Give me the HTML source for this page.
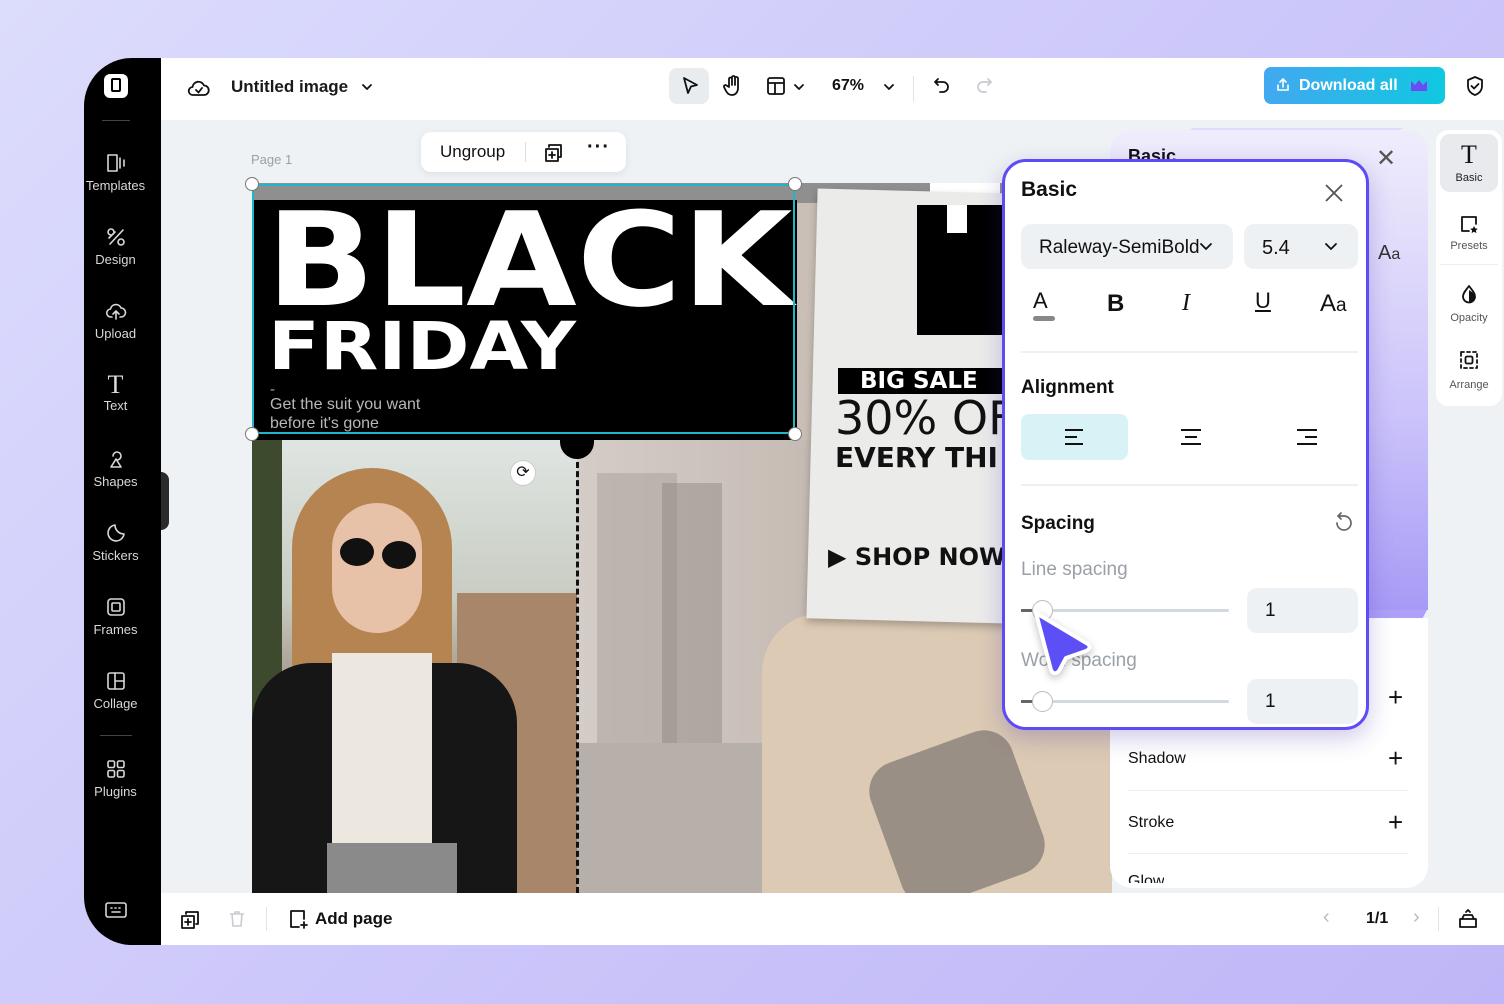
<!DOCTYPE html>
<html><head><meta charset="utf-8">
<style>
*{margin:0;padding:0;box-sizing:border-box}
body{width:1504px;height:1004px;overflow:hidden;font-family:"Liberation Sans",sans-serif;background:linear-gradient(135deg,#dcdcfc 0%,#cdc8fa 50%,#bfb6f7 100%);position:relative;color:#111}
.a{position:absolute}
.app{left:84px;top:58px;width:1420px;height:887px;background:#eff2f5;border-radius:48px 0 0 48px;overflow:hidden}
.side{left:0;top:0;width:77px;height:887px;background:#000;color:#d8d8d8;font-size:13px;text-align:center}
.si{position:absolute;left:-7px;width:77px}
.si svg{display:block;margin:0 auto 4px}
.top{left:77px;top:0;width:1343px;height:62px;background:#fff}
.bot{left:77px;top:835px;width:1343px;height:52px;background:#fff}
.ic{stroke:#111;fill:none;stroke-width:1.8;stroke-linecap:round;stroke-linejoin:round}
.wi{stroke:#d8d8d8;fill:none;stroke-width:1.6;stroke-linecap:round;stroke-linejoin:round}
.pop{left:1002px;top:159px;width:367px;height:571px;background:#fff;border:3px solid #5d4cf6;border-radius:24px;box-shadow:0 8px 24px rgba(60,40,160,.25)}
.pill{background:#eef1f4;border-radius:10px;position:absolute}
.lbl{position:absolute;font-size:19px;font-weight:bold;color:#111}
.gl{position:absolute;font-size:19px;color:#9aa0a8}
</style></head><body>

<div class="a app">
  <div class="a" style="left:168px;top:125px;width:860px;height:710px;background:#c9bfb6;overflow:hidden">
    <div class="a" style="left:325px;top:257px;width:535px;height:453px;background:linear-gradient(90deg,#d4ccc6 0%,#c7bdb6 40%,#bdb2a8 60%,#d6c7b5 100%)"></div>
    <div class="a" style="left:345px;top:290px;width:80px;height:300px;background:#a8a09a;opacity:.5"></div>
    <div class="a" style="left:410px;top:300px;width:60px;height:260px;background:#8c8580;opacity:.45"></div>
    <div class="a" style="left:325px;top:560px;width:260px;height:150px;background:#b7b0aa"></div>
    <div class="a" style="left:510px;top:430px;width:350px;height:280px;background:#dccab4;border-radius:60px 0 0 0"></div>
    <div class="a" style="left:630px;top:560px;width:150px;height:150px;background:#9a8f85;border-radius:30px;transform:rotate(-20deg)"></div>
    <div class="a" style="left:0;top:257px;width:325px;height:453px;background:linear-gradient(180deg,#dfe5e2 0%,#c8ccc2 35%,#9c8a78 60%,#7a6a5a 100%)"></div>
    <div class="a" style="left:0;top:257px;width:30px;height:453px;background:#3d4a2e"></div>
    <div class="a" style="left:205px;top:410px;width:120px;height:300px;background:#a8866a"></div>
    <div class="a" style="left:40px;top:285px;width:160px;height:240px;background:#b58450;border-radius:80px 80px 40px 40px"></div>
    <div class="a" style="left:80px;top:320px;width:90px;height:130px;background:#e7c2a8;border-radius:45px"></div>
    <div class="a" style="left:88px;top:355px;width:34px;height:28px;background:#111;border-radius:50%"></div>
    <div class="a" style="left:130px;top:358px;width:34px;height:28px;background:#111;border-radius:50%"></div>
    <div class="a" style="left:0;top:480px;width:265px;height:230px;background:#161616;border-radius:60px 60px 0 0"></div>
    <div class="a" style="left:80px;top:470px;width:100px;height:240px;background:#ece8df"></div>
    <div class="a" style="left:75px;top:660px;width:130px;height:50px;background:#8a8a8a"></div>
    <div class="a" style="left:324px;top:270px;width:0;height:440px;border-left:3px dashed #111"></div>
    <div class="a" style="left:308px;top:248px;width:34px;height:28px;background:#000;border-radius:0 0 17px 17px"></div>
    <div class="a" style="left:0;top:0;width:545px;height:257px;background:#000"></div>
    <div class="a" style="left:0;top:0;width:560px;height:17px;background:#8f8f8f"></div>
    <div class="a" style="left:14px;top:12px;font-size:130px;line-height:1;font-weight:bold;color:#fff;transform:scaleX(1.1);transform-origin:left;font-family:'DejaVu Sans',sans-serif;white-space:nowrap">BLACK</div>
    <div class="a" style="left:16px;top:131px;font-size:66px;line-height:1;font-weight:bold;color:#fff;transform:scaleX(1.15);transform-origin:left;font-family:'DejaVu Sans',sans-serif;white-space:nowrap">FRIDAY</div>
    <div class="a" style="left:18px;top:198px;font-size:15px;color:#aaa">-</div>
    <div class="a" style="left:18px;top:212px;font-size:16px;color:#b8b8b8;line-height:19px">Get the suit you want<br>before it's gone</div>
    <div class="a" style="left:545px;top:0;width:315px;height:20px;background:#8f8f8f"></div>
    <div class="a" style="left:678px;top:0;width:70px;height:20px;background:#fff"></div>
    <div class="a" style="left:560px;top:8px;width:200px;height:430px;background:#ebebea;transform:rotate(1.5deg);box-shadow:0 4px 8px rgba(0,0,0,.25)"></div>
    <div class="a" style="left:665px;top:22px;width:90px;height:130px;background:#000"></div>
    <div class="a" style="left:695px;top:22px;width:20px;height:28px;background:#fff"></div>
    <div class="a" style="left:586px;top:185px;width:170px;height:26px;background:#000;color:#fff;font-weight:bold;font-size:23px;padding-left:22px;line-height:26px;white-space:nowrap;overflow:hidden;font-family:'DejaVu Sans',sans-serif">BIG SALE</div>
    <div class="a" style="left:583px;top:208px;font-size:46px;font-family:'DejaVu Sans',sans-serif;white-space:nowrap">30% OF</div>
    <div class="a" style="left:583px;top:258px;font-size:28px;font-weight:bold;font-family:'DejaVu Sans',sans-serif;white-space:nowrap">EVERY THI</div>
    <div class="a" style="left:576px;top:360px;font-size:24px;font-weight:bold;font-family:'DejaVu Sans',sans-serif;white-space:nowrap">▶ SHOP NOW</div>
  </div>
  <div class="a" style="left:168px;top:126px;width:543px;height:250px;border:2px solid #1fb6c9"></div>
  <div class="a" style="left:161px;top:119px;width:14px;height:14px;border-radius:50%;background:#fff;border:1.5px solid #777"></div>
  <div class="a" style="left:704px;top:119px;width:14px;height:14px;border-radius:50%;background:#fff;border:1.5px solid #777"></div>
  <div class="a" style="left:161px;top:369px;width:14px;height:14px;border-radius:50%;background:#fff;border:1.5px solid #777"></div>
  <div class="a" style="left:704px;top:369px;width:14px;height:14px;border-radius:50%;background:#fff;border:1.5px solid #777"></div>
  <div class="a" style="left:426px;top:402px;width:26px;height:26px;border-radius:50%;background:#fff;border:1px solid #ccc;font-size:16px;text-align:center;line-height:24px">⟳</div>
  <div class="a" style="left:167px;top:94px;font-size:13px;color:#9aa0a8">Page 1</div>
  <div class="a" style="left:337px;top:74px;width:205px;height:40px;background:#fff;border-radius:10px;box-shadow:0 2px 8px rgba(0,0,0,.08)">
    <div class="a" style="left:19px;top:10px;font-size:17px">Ungroup</div>
    <div class="a" style="left:104px;top:10px;width:1px;height:20px;background:#ddd"></div>
    <svg class="a" style="left:122px;top:10px" width="22" height="22" viewBox="0 0 22 22"><path class="ic" d="M6 5V3h12v12h-2M3 7h12v12H3z M9 10v6M6 13h6"/></svg>
    <div class="a" style="left:166px;top:4px;font-size:20px;font-weight:bold;letter-spacing:1px">···</div>
  </div>

  <svg class="a" style="left:900px;top:60px" width="460" height="680" viewBox="0 0 460 680">
    <defs><linearGradient id="g" x1="0" y1="0" x2="0" y2="1"><stop offset="0" stop-color="#eeeafc"/><stop offset=".5" stop-color="#c9c0fa"/><stop offset="1" stop-color="#9b8cf5"/></linearGradient></defs>
    <path d="M126 70 Q130 70 150 70 L420 70 Q444 70 444 94 L444 490 L386 600 L120 600 Z" fill="url(#g)"/>
    <path d="M126 40 L210 10 L420 10 L126 120Z" fill="#ddd8fb" opacity=".9"/>
  </svg>
  <div class="a" style="left:1026px;top:72px;width:318px;height:755px;border-radius:22px;overflow:hidden">
    <div class="a" style="left:0;top:0;width:318px;height:480px;background:linear-gradient(180deg,#efedfc,#cbc3fa 60%,#a79af6)"></div>
    <div class="a" style="left:0;top:560px;width:318px;height:195px;background:#fff"></div>
    <div class="a" style="left:18px;top:16px;font-size:18px;font-weight:bold">Basic</div>
    <div class="a" style="left:266px;top:14px;font-size:24px;color:#555">✕</div>
    <div class="a" style="left:268px;top:112px;font-size:20px;color:#333">A<span style="font-size:16px">a</span></div>
  </div>
  <div class="a" style="left:1026px;top:560px;width:318px;height:270px;border-radius:0 0 22px 22px;background:#fff"></div>
  <div class="a" style="left:1044px;top:692px;font-size:16px">Shadow</div>
  <div class="a" style="left:1304px;top:685px;font-size:26px">+</div>
  <div class="a" style="left:1044px;top:732px;width:280px;height:1px;background:#eee"></div>
  <div class="a" style="left:1044px;top:756px;font-size:16px">Stroke</div>
  <div class="a" style="left:1304px;top:749px;font-size:26px">+</div>
  <div class="a" style="left:1044px;top:795px;width:280px;height:1px;background:#eee"></div>
  <div class="a" style="left:1044px;top:815px;font-size:16px;height:10px;overflow:hidden">Glow</div>
  <div class="a" style="left:1304px;top:624px;font-size:26px">+</div>

  <div class="a" style="left:1352px;top:72px;width:66px;height:276px;background:#fff;border-radius:12px;font-size:11px;color:#555;text-align:center">
    <div class="a" style="left:4px;top:4px;width:58px;height:58px;background:#e8eaee;border-radius:10px"></div>
    <div class="a" style="left:0;top:10px;width:66px;font-size:26px;color:#111;font-family:'Liberation Serif',serif">T</div>
    <div class="a" style="left:0;top:42px;width:66px;color:#222">Basic</div>
    <svg class="a" style="left:23px;top:84px" width="20" height="20" viewBox="0 0 20 20"><path class="ic" stroke-width="1.6" d="M10 17H3V3h14v7"/><path d="M15 12l1.2 2.4 2.6.3-1.9 1.8.5 2.6-2.4-1.3-2.4 1.3.5-2.6-1.9-1.8 2.6-.3z" fill="#111"/></svg>
    <div class="a" style="left:0;top:110px;width:66px">Presets</div>
    <div class="a" style="left:4px;top:134px;width:58px;height:1px;background:#eee"></div>
    <svg class="a" style="left:24px;top:154px" width="18" height="20" viewBox="0 0 18 20"><path class="ic" stroke-width="1.6" d="M9 2C6 6 3 9 3 12.5a6 6 0 0012 0C15 9 12 6 9 2z"/><path d="M9 6v12.5a6 6 0 006-6C15 10 12 8 9 6z" fill="#111"/></svg>
    <div class="a" style="left:0;top:182px;width:66px">Opacity</div>
    <svg class="a" style="left:23px;top:220px" width="20" height="20" viewBox="0 0 20 20"><path class="ic" stroke-width="1.6" stroke-dasharray="3 3" d="M2 2h16v16H2z"/><rect x="6.5" y="6.5" width="7" height="7" rx="1.5" class="ic" stroke-width="1.6"/></svg>
    <div class="a" style="left:0;top:249px;width:66px">Arrange</div>
  </div>

  <div class="a side">
    <div class="a" style="left:20px;top:16px;width:24px;height:24px;background:#fff;border-radius:6px"></div>
    <div class="a" style="left:27px;top:20px;width:10px;height:14px;border:2.5px solid #000;border-radius:2px"></div>
    <div class="a" style="left:18px;top:62px;width:28px;height:1px;background:#444"></div>
    <div class="si" style="top:94px"><svg width="22" height="22" viewBox="0 0 22 22"><path class="wi" d="M3 3h9v16H3zM15 6v10M19 8v6"/></svg>Templates</div>
    <div class="si" style="top:168px"><svg width="22" height="22" viewBox="0 0 22 22"><path class="wi" d="M6 3a3 3 0 100 6 3 3 0 000-6zM16 13a3 3 0 100 6 3 3 0 000-6zM5 18L18 4M4 12l6-6"/></svg>Design</div>
    <div class="si" style="top:242px"><svg width="22" height="22" viewBox="0 0 22 22"><path class="wi" d="M7 17H6a4 4 0 01-.5-8A5.5 5.5 0 0116 8a4.5 4.5 0 010 9h-1M11 19v-8M8 14l3-3 3 3"/></svg>Upload</div>
    <div class="si" style="top:314px"><div style="font-family:'Liberation Serif',serif;font-size:26px;line-height:26px;color:#ddd">T</div>Text</div>
    <div class="si" style="top:390px"><svg width="22" height="22" viewBox="0 0 22 22"><path class="wi" d="M8 8a4 4 0 114 4M11 11l5 8H6z"/></svg>Shapes</div>
    <div class="si" style="top:464px"><svg width="22" height="22" viewBox="0 0 22 22"><path class="wi" d="M19 12a8 8 0 11-9-9M10 3c0 5 4 9 9 9"/></svg>Stickers</div>
    <div class="si" style="top:538px"><svg width="22" height="22" viewBox="0 0 22 22"><rect class="wi" x="3" y="3" width="16" height="16" rx="3"/><rect class="wi" x="7" y="7" width="8" height="8" rx="1"/></svg>Frames</div>
    <div class="si" style="top:612px"><svg width="22" height="22" viewBox="0 0 22 22"><rect class="wi" x="3" y="3" width="16" height="16" rx="2"/><path class="wi" d="M10 3v16M10 11h9"/></svg>Collage</div>
    <div class="a" style="left:16px;top:677px;width:32px;height:1px;background:#444"></div>
    <div class="si" style="top:700px"><svg width="22" height="22" viewBox="0 0 22 22"><rect class="wi" x="3" y="3" width="6.5" height="6.5" rx="1.5"/><rect class="wi" x="12.5" y="3" width="6.5" height="6.5" rx="1.5"/><rect class="wi" x="3" y="12.5" width="6.5" height="6.5" rx="1.5"/><rect class="wi" x="12.5" y="12.5" width="6.5" height="6.5" rx="1.5"/></svg>Plugins</div>
    <svg class="a" style="left:20px;top:842px" width="24" height="20" viewBox="0 0 24 20"><rect class="wi" x="2" y="3" width="20" height="14" rx="2"/><path class="wi" d="M7 8h1M11 8h1M15 8h1M8 12h8"/></svg>
  </div>
  <div class="a" style="left:77px;top:414px;width:8px;height:58px;background:#2a2a2a;border-radius:0 8px 8px 0"></div>

  <div class="a top">
    <svg class="a" style="left:26px;top:18px" width="24" height="24" viewBox="0 0 24 24"><path class="ic" d="M7 19H6a4 4 0 01-.5-8A6 6 0 0117 9.5 4.5 4.5 0 0117 19zM9 14l2.5 2.5L15 12"/></svg>
    <div class="a" style="left:70px;top:19px;font-size:17px;font-weight:bold;color:#1a1a1a">Untitled image</div>
    <svg class="a" style="left:200px;top:24px" width="12" height="10" viewBox="0 0 12 10"><path class="ic" d="M2 3l4 4 4-4"/></svg>
    <div class="a" style="left:508px;top:10px;width:40px;height:36px;background:#e9ecef;border-radius:8px"></div>
    <svg class="a" style="left:518px;top:17px" width="22" height="22" viewBox="0 0 22 22"><path class="ic" d="M5 3l13 7-6 1.5L9 18z"/></svg>
    <svg class="a" style="left:560px;top:16px" width="24" height="24" viewBox="0 0 24 24"><path class="ic" d="M8 12V5a1.5 1.5 0 013 0v6V3.5a1.5 1.5 0 013 0V11V4.5a1.5 1.5 0 013 0V14c0 4-2.5 7-6 7s-5-2-7-6l-1-2a1.5 1.5 0 012.5-1.5L8 13"/></svg>
    <svg class="a" style="left:604px;top:17px" width="22" height="22" viewBox="0 0 22 22"><rect class="ic" x="3" y="3" width="16" height="16" rx="2"/><path class="ic" d="M3 8h16M10 8v11"/></svg>
    <svg class="a" style="left:632px;top:24px" width="12" height="10" viewBox="0 0 12 10"><path class="ic" d="M2 3l4 4 4-4"/></svg>
    <div class="a" style="left:671px;top:19px;font-size:16px;font-weight:bold">67%</div>
    <svg class="a" style="left:722px;top:24px" width="12" height="10" viewBox="0 0 12 10"><path class="ic" d="M2 3l4 4 4-4"/></svg>
    <div class="a" style="left:752px;top:18px;width:1px;height:26px;background:#e3e3e3"></div>
    <svg class="a" style="left:770px;top:17px" width="22" height="22" viewBox="0 0 22 22"><path class="ic" d="M7 4L4 7l3 3M4 7h8a5 5 0 010 10H9"/></svg>
    <svg class="a" style="left:812px;top:17px" width="22" height="22" viewBox="0 0 22 22"><path d="M15 4l3 3-3 3M18 7h-8a5 5 0 000 10h3" fill="none" stroke="#c8ccd2" stroke-width="1.8" stroke-linecap="round"/></svg>
    <div class="a" style="left:1103px;top:9px;width:181px;height:37px;border-radius:7px;background:linear-gradient(90deg,#42a8f0,#10c8e0);color:#fff;font-size:16px;font-weight:bold;line-height:37px">
      <svg class="a" style="left:11px;top:10px" width="16" height="16" viewBox="0 0 16 16"><path d="M8 10V2M5 5l3-3 3 3M3 8v5h10V8" fill="none" stroke="#fff" stroke-width="1.6" stroke-linecap="round"/></svg>
      <span class="a" style="left:35px;top:0">Download all</span>
      <svg class="a" style="left:146px;top:12px" width="18" height="13" viewBox="0 0 18 13"><path d="M1 2l4 4 4-5 4 5 4-4v10H1z" fill="#6a4df2"/></svg>
    </div>
    <svg class="a" style="left:1302px;top:16px" width="24" height="24" viewBox="0 0 24 24"><path class="ic" d="M12 3l7 3v6c0 4.5-3 7.5-7 9-4-1.5-7-4.5-7-9V6z M8.5 12l2.5 2.5 4.5-4.5"/></svg>
  </div>
  <div class="a bot">
    <svg class="a" style="left:18px;top:16px" width="22" height="22" viewBox="0 0 22 22"><path class="ic" d="M7 5V3h12v12h-2M3 7h12v12H3zM9 10v6M6 13h6"/></svg>
    <svg class="a" style="left:66px;top:16px" width="20" height="20" viewBox="0 0 20 20"><path d="M3 5h14M8 5V3h4v2M5 5l1 12h8l1-12" fill="none" stroke="#c8ccd2" stroke-width="1.6"/></svg>
    <div class="a" style="left:105px;top:14px;width:1px;height:24px;background:#e3e3e3"></div>
    <svg class="a" style="left:126px;top:15px" width="22" height="22" viewBox="0 0 22 22"><path class="ic" d="M12 19H4V3h13v8M17 14v6M14 17h6"/></svg>
    <div class="a" style="left:154px;top:16px;font-size:17px;font-weight:bold">Add page</div>
    <div class="a" style="left:1162px;top:13px;font-size:20px;color:#bbb">‹</div>
    <div class="a" style="left:1205px;top:17px;font-size:16px;font-weight:bold">1/1</div>
    <div class="a" style="left:1252px;top:13px;font-size:20px;color:#bbb">›</div>
    <div class="a" style="left:1277px;top:14px;width:1px;height:24px;background:#e3e3e3"></div>
    <svg class="a" style="left:1296px;top:15px" width="22" height="22" viewBox="0 0 22 22"><path class="ic" d="M3 11h16v8H3zM5 11l2-4h8l2 4M9 4l2-2 2 2"/></svg>
  </div>
</div>

<div class="a pop">
  <div class="lbl" style="left:16px;top:16px;font-size:21px">Basic</div>
  <svg class="a" style="left:318px;top:20px" width="22" height="22" viewBox="0 0 22 22"><path d="M3 3l16 16M19 3L3 19" stroke="#555" stroke-width="1.8"/></svg>
  <div class="pill" style="left:16px;top:62px;width:212px;height:45px"></div>
  <div class="a" style="left:34px;top:75px;font-size:19px;width:160px;overflow:hidden;white-space:nowrap">Raleway-SemiBold</div>
  <svg class="a" style="left:194px;top:80px" width="14" height="10" viewBox="0 0 14 10"><path class="ic" d="M2 2l5 5 5-5"/></svg>
  <div class="pill" style="left:239px;top:62px;width:114px;height:45px"></div>
  <div class="a" style="left:257px;top:75px;font-size:20px">5.4</div>
  <svg class="a" style="left:319px;top:80px" width="14" height="10" viewBox="0 0 14 10"><path class="ic" d="M2 2l5 5 5-5"/></svg>
  <div class="a" style="left:28px;top:126px;font-size:22px">A</div>
  <div class="a" style="left:28px;top:154px;width:22px;height:5px;background:#888;border-radius:3px"></div>
  <div class="a" style="left:102px;top:128px;font-size:24px;font-weight:bold">B</div>
  <div class="a" style="left:177px;top:128px;font-size:24px;font-style:italic;font-family:'Liberation Serif',serif">I</div>
  <div class="a" style="left:250px;top:126px;font-size:22px;text-decoration:underline">U</div>
  <div class="a" style="left:315px;top:128px;font-size:24px">A<span style="font-size:19px">a</span></div>
  <div class="a" style="left:16px;top:189px;width:337px;height:2px;background:#eef0f2"></div>
  <div class="lbl" style="left:16px;top:215px">Alignment</div>
  <div class="a" style="left:16px;top:252px;width:107px;height:46px;background:#d8f2f6;border-radius:8px"></div>
  <svg class="a" style="left:58px;top:266px" width="24" height="18" viewBox="0 0 24 18"><path d="M2 2h18M2 9h12M2 16h18" stroke="#111" stroke-width="2"/></svg>
  <svg class="a" style="left:174px;top:266px" width="24" height="18" viewBox="0 0 24 18"><path d="M2 2h20M6 9h12M2 16h20" stroke="#111" stroke-width="2"/></svg>
  <svg class="a" style="left:290px;top:266px" width="24" height="18" viewBox="0 0 24 18"><path d="M2 2h20M10 9h12M2 16h20" stroke="#111" stroke-width="2"/></svg>
  <div class="a" style="left:16px;top:322px;width:337px;height:2px;background:#eef0f2"></div>
  <div class="lbl" style="left:16px;top:351px">Spacing</div>
  <svg class="a" style="left:328px;top:350px" width="22" height="22" viewBox="0 0 22 22"><path d="M4 11a7 7 0 107-7H7M8 1L5 4l3 3" fill="none" stroke="#666" stroke-width="1.7" stroke-linecap="round"/></svg>
  <div class="gl" style="left:16px;top:397px">Line spacing</div>
  <div class="a" style="left:16px;top:447px;width:208px;height:3px;background:#d4d9df;border-radius:2px"></div>
  <div class="a" style="left:16px;top:447px;width:20px;height:3px;background:#666"></div>
  <div class="a" style="left:27px;top:438px;width:21px;height:21px;border-radius:50%;background:#fff;border:1px solid #bbb"></div>
  <div class="pill" style="left:242px;top:426px;width:111px;height:45px"></div>
  <div class="a" style="left:260px;top:438px;font-size:19px">1</div>
  <div class="gl" style="left:16px;top:488px">Word spacing</div>
  <div class="a" style="left:16px;top:538px;width:208px;height:3px;background:#d4d9df;border-radius:2px"></div>
  <div class="a" style="left:16px;top:538px;width:20px;height:3px;background:#666"></div>
  <div class="a" style="left:27px;top:529px;width:21px;height:21px;border-radius:50%;background:#fff;border:1px solid #bbb"></div>
  <div class="pill" style="left:242px;top:517px;width:111px;height:45px"></div>
  <div class="a" style="left:260px;top:529px;font-size:19px">1</div>
</div>
<svg class="a" style="left:1026px;top:604px;filter:drop-shadow(0 3px 4px rgba(0,0,0,.25))" width="72" height="76" viewBox="0 0 72 76"><path d="M10 9 L62 40 Q66 44 60 47 L40 54 L33 67 Q28 72 25 66 Z" fill="#5b4ff5" stroke="#fff" stroke-width="4" stroke-linejoin="round"/></svg>
</body></html>
